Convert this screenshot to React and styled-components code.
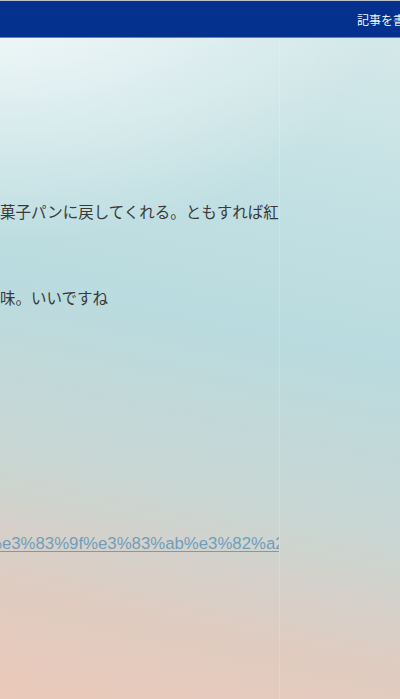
import React from "react";
import styled, { createGlobalStyle } from "styled-components";

const Global = createGlobalStyle`
  html, body { margin: 0; padding: 0; height: 100%; }
  body { overflow: hidden; }
  #root { height: 100%; }
`;

const Page = styled.div`
  height: 100vh;
  display: flex;
  flex-direction: column;
  overflow: hidden;
  background:
    radial-gradient(ellipse 95% 35% at 0% 0%, rgba(255,255,255,0.75), rgba(255,255,255,0) 100%),
    linear-gradient(192deg, #d8eaeb 0%, #c2e0e3 28%, #badbdf 46%, #c9d7d4 68%, #dfcbc0 86%, #eac9b9 100%);
`;

const Header = styled.header`
  flex: 0 0 auto;
  height: 36px;
  background: #03318d;
  border-top: 1px solid #b9bfcb;
  border-bottom: 1px solid #5f82c4;
  display: flex;
  justify-content: flex-end;
  align-items: center;
  overflow: hidden;
`;

const NavLink = styled.a`
  color: #f2f4f8;
  font-family: "Noto Sans CJK JP", sans-serif;
  font-size: 12px;
  white-space: nowrap;
  margin-right: -17px;
  text-decoration: none;
`;

const Body = styled.div`
  flex: 1;
  display: flex;
`;

const Main = styled.main`
  width: 279px;
  flex: 0 0 279px;
  overflow: hidden;
  display: flex;
  flex-direction: column;
  border-right: 1px solid rgba(255, 255, 255, 0.18);
`;

const Side = styled.aside`
  flex: 1;
`;

const Line = styled.p`
  margin: 0;
  white-space: nowrap;
  font-family: "Noto Sans CJK JP", sans-serif;
  font-size: 15.5px;
  line-height: 20px;
  color: #3a3a3a;
  margin-top: ${(p) => p.$top}px;
`;

const UrlLine = styled.p`
  margin: 0;
  white-space: nowrap;
  font-family: "Liberation Sans", Arial, sans-serif;
  font-size: 16.8px;
  line-height: 20px;
  margin-top: ${(p) => p.$top}px;
  margin-left: -13px;
`;

const Url = styled.a`
  color: #6f9ebd;
  text-decoration: underline;
  text-underline-offset: 2px;
`;

export default function App() {
  return (
    <>
      <Global />
      <Page>
        <Header>
          <NavLink>記事を書く</NavLink>
        </Header>
        <Body>
          <Main>
            <Line $top={163}>菓子パンに戻してくれる。ともすれば紅</Line>
            <Line $top={66}>味。いいですね</Line>
            <UrlLine $top={227}>
              <Url>%e3%83%9f%e3%83%ab%e3%82%a2%e3%83%b3</Url>
            </UrlLine>
          </Main>
          <Side />
        </Body>
      </Page>
    </>
  );
}
